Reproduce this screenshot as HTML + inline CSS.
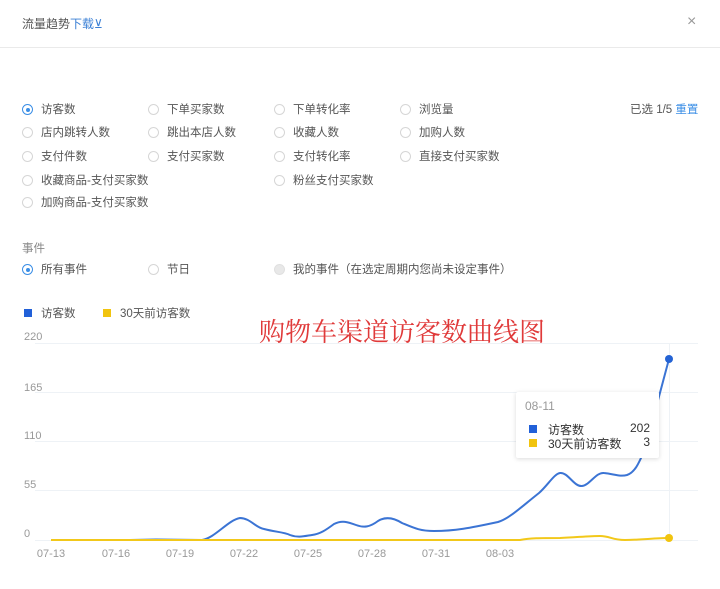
<!DOCTYPE html>
<html><head><meta charset="utf-8"><style>
*{margin:0;padding:0;box-sizing:border-box}
body{width:720px;height:589px;background:#fff;font-family:"Liberation Sans","Noto Sans CJK SC",sans-serif;font-size:11.5px;color:#555;position:relative;overflow:hidden}
.a{position:absolute;white-space:nowrap}
.r{position:absolute;width:11px;height:11px;border:1px solid #d6d6d6;border-radius:50%;background:#fff}
.r.on{border-color:#3a8ee6}
.r.on::after{content:"";position:absolute;left:2.5px;top:2.5px;width:4px;height:4px;border-radius:50%;background:#3a8ee6}
.r.dis{background:#e8e8e8;border-color:#e0e0e0}
</style></head><body>
<div class="a" style="left:22px;top:15px;font-size:12px;color:#555">流量趋势<span style="color:#3a7fd5">下载⊻</span></div>
<div class="a" style="left:687px;top:13px;font-size:16px;color:#999">×</div>
<div class="a" style="left:0;top:47px;width:720px;height:1px;background:#eaeaea"></div>

<div class="r on" style="left:22px;top:104px"></div><div class="a" style="left:41px;top:101px">访客数</div>
<div class="r" style="left:148px;top:104px"></div><div class="a" style="left:167px;top:101px">下单买家数</div>
<div class="r" style="left:274px;top:104px"></div><div class="a" style="left:293px;top:101px">下单转化率</div>
<div class="r" style="left:400px;top:104px"></div><div class="a" style="left:419px;top:101px">浏览量</div>
<div class="a" style="left:630px;top:101px">已选 1/5 <span style="color:#3a8ee6">重置</span></div>

<div class="r" style="left:22px;top:127px"></div><div class="a" style="left:41px;top:124px">店内跳转人数</div>
<div class="r" style="left:148px;top:127px"></div><div class="a" style="left:167px;top:124px">跳出本店人数</div>
<div class="r" style="left:274px;top:127px"></div><div class="a" style="left:293px;top:124px">收藏人数</div>
<div class="r" style="left:400px;top:127px"></div><div class="a" style="left:419px;top:124px">加购人数</div>

<div class="r" style="left:22px;top:151px"></div><div class="a" style="left:41px;top:148px">支付件数</div>
<div class="r" style="left:148px;top:151px"></div><div class="a" style="left:167px;top:148px">支付买家数</div>
<div class="r" style="left:274px;top:151px"></div><div class="a" style="left:293px;top:148px">支付转化率</div>
<div class="r" style="left:400px;top:151px"></div><div class="a" style="left:419px;top:148px">直接支付买家数</div>

<div class="r" style="left:22px;top:175px"></div><div class="a" style="left:41px;top:172px">收藏商品-支付买家数</div>
<div class="r" style="left:274px;top:175px"></div><div class="a" style="left:293px;top:172px">粉丝支付买家数</div>

<div class="r" style="left:22px;top:197px"></div><div class="a" style="left:41px;top:194px">加购商品-支付买家数</div>

<div class="a" style="left:22px;top:240px;color:#888">事件</div>
<div class="r on" style="left:22px;top:264px"></div><div class="a" style="left:41px;top:261px">所有事件</div>
<div class="r" style="left:148px;top:264px"></div><div class="a" style="left:167px;top:261px">节日</div>
<div class="r dis" style="left:274px;top:264px"></div><div class="a" style="left:293px;top:261px">我的事件（在选定周期内您尚未设定事件）</div>

<div class="a" style="left:24px;top:309px;width:8px;height:8px;background:#2160d8"></div><div class="a" style="left:41px;top:305px">访客数</div>
<div class="a" style="left:103px;top:309px;width:8px;height:8px;background:#f1c40f"></div><div class="a" style="left:120px;top:305px">30天前访客数</div>
<div class="a" style="left:259px;top:312px;font-size:26px;color:#e03a3a;font-family:'Noto Serif CJK SC','Liberation Serif',serif">购物车渠道访客数曲线图</div>

<svg class="a" style="left:0;top:0" width="720" height="589">
<g stroke="#eef2f6" stroke-width="1">
<line x1="35" y1="343.5" x2="698" y2="343.5"/><line x1="35" y1="392.5" x2="698" y2="392.5"/>
<line x1="35" y1="441.5" x2="698" y2="441.5"/><line x1="35" y1="490.5" x2="698" y2="490.5"/>
<line x1="35" y1="540.5" x2="698" y2="540.5"/><line x1="669.5" y1="343" x2="669.5" y2="540"/>
</g>
<g font-size="11" fill="#999" font-family="Liberation Sans,sans-serif">
<text x="24" y="340">220</text><text x="24" y="391">165</text><text x="24" y="439">110</text><text x="24" y="488">55</text><text x="24" y="537">0</text>
<g text-anchor="middle"><text x="51" y="557">07-13</text><text x="116" y="557">07-16</text><text x="180" y="557">07-19</text><text x="244" y="557">07-22</text><text x="308" y="557">07-25</text><text x="372" y="557">07-28</text><text x="436" y="557">07-31</text><text x="500" y="557">08-03</text></g>
</g>
<path d="M51 540 L130 540 L156 539.5 L202 540 C215 538 228 520 240 518 C250 518 256 528 264 529 C275 532 284 532 290 535 C298 538 305 536 312 535 C320 534 326 530 334 524 C342 520 348 522 356 525 C364 528 370 527 378 521 C386 516 394 518 402 523 C414 528 420 531 434 531 C455 531 470 528 498 522 C510 518 520 508 539 493 C548 485 554 474 560 473 C568 472 574 487 582 486 C590 485 596 472 604 473 C614 474 620 477 627 475 C636 472 640 460 645 449 L669 359" fill="none" stroke="#3b74d4" stroke-width="2"/>
<path d="M51 540 L520 540 C530 538 540 538 560 538 C580 537 590 536 600 536 C610 536 612 540 625 540 C640 540 655 538 669 538" fill="none" stroke="#f2c81a" stroke-width="2"/>
<circle cx="669" cy="359" r="4" fill="#2463d4"/>
<circle cx="669" cy="538" r="4" fill="#f1c40f"/>
</svg>

<div class="a" style="left:516px;top:392px;width:143px;height:66px;background:#fff;box-shadow:0 1px 5px rgba(0,0,0,.15);border-radius:2px"></div>
<div class="a" style="left:525px;top:399px;color:#999;font-size:12px">08-11</div>
<div class="a" style="left:529px;top:425px;width:8px;height:8px;background:#2160d8"></div>
<div class="a" style="left:548px;top:421px;color:#333;font-size:12px">访客数</div>
<div class="a" style="left:610px;top:421px;width:40px;text-align:right;color:#333;font-size:12px">202</div>
<div class="a" style="left:529px;top:439px;width:8px;height:8px;background:#f1c40f"></div>
<div class="a" style="left:548px;top:435px;color:#333;font-size:12px">30天前访客数</div>
<div class="a" style="left:610px;top:435px;width:40px;text-align:right;color:#333;font-size:12px">3</div>
</body></html>
